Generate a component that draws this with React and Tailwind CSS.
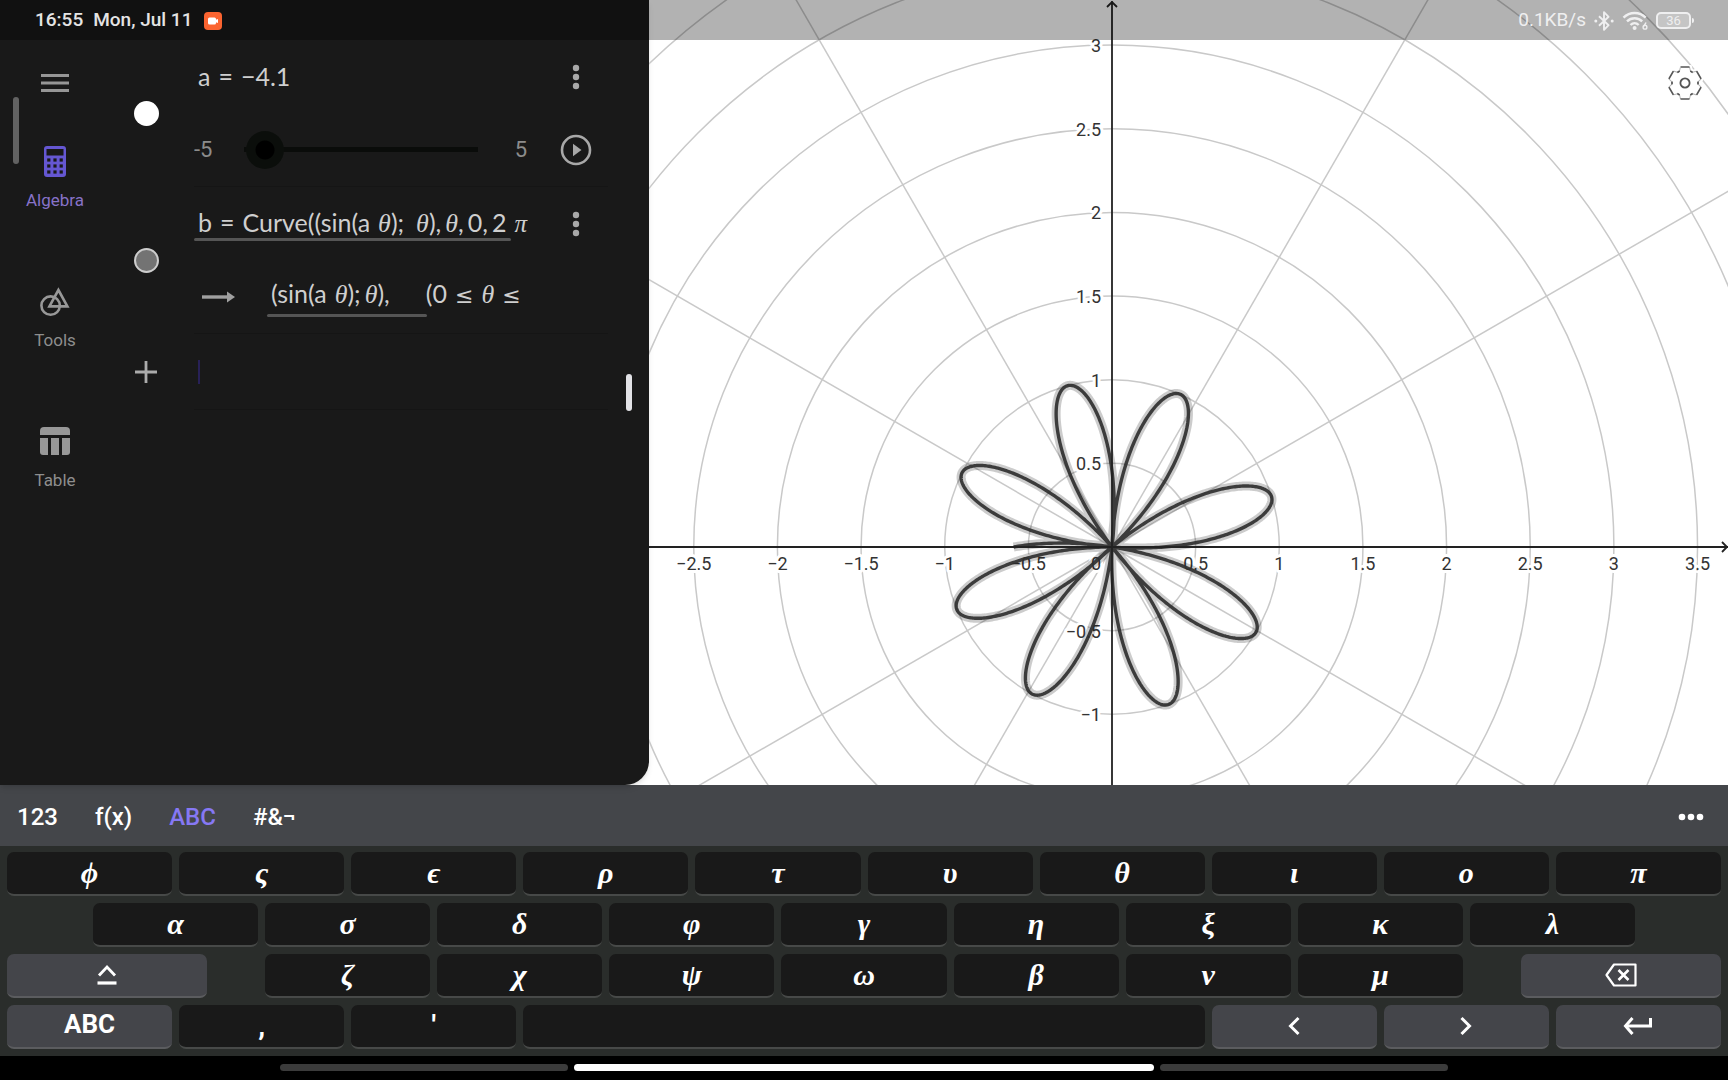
import React, { useState } from "react";

const SANS = "font-[Roboto,'Open_Sans',sans-serif]";
const MATH = "font-[Lato,'Open_Sans',sans-serif]";
const GREEK = "font-['Liberation_Serif','DejaVu_Serif',serif]";

const ROWS = [
  ["ϕ", "ς", "ϵ", "ρ", "τ", "υ", "θ", "ι", "ο", "π"],
  ["α", "σ", "δ", "φ", "γ", "η", "ξ", "κ", "λ"],
  ["ζ", "χ", "ψ", "ω", "β", "ν", "μ"],
];

// Graph geometry, in svg units
const VIEW = { w: 1079, h: 785 };
const ORIGIN = { x: 463, y: 547 };
const UNIT = 167.3;

const curvePath = (a) => {
  const steps = 1600;
  const points = [];
  for (let i = 0; i <= steps; i++) {
    const t = (i / steps) * 2 * Math.PI;
    const r = Math.sin(a * t) * UNIT;
    const x = ORIGIN.x + r * Math.cos(t);
    const y = ORIGIN.y - r * Math.sin(t);
    points.push(`${x.toFixed(2)} ${y.toFixed(2)}`);
  }
  return `M${points.join("L")}`;
};

const formatTick = (n) => String(n).replace("-", "−");

const Graph = ({ a }) => {
  const radii = Array.from({ length: 10 }, (_, i) => (i + 1) * 0.5);
  const rays = [30, 60, 120, 150, 210, 240, 300, 330];
  const xTicks = [-2.5, -2, -1.5, -1, -0.5, 0.5, 1, 1.5, 2, 2.5, 3, 3.5];
  const yTicks = [3, 2.5, 2, 1.5, 1, 0.5, -0.5, -1];
  const path = curvePath(a);

  return (
    <svg
      className="block w-full h-full"
      viewBox={`0 0 ${VIEW.w} ${VIEW.h}`}
      preserveAspectRatio="xMidYMid slice"
      role="img"
      aria-label="Polar graph"
    >
      <g fill="none" stroke="#c9c9c9" strokeWidth="1.5">
        {radii.map((r) => (
          <circle key={r} cx={ORIGIN.x} cy={ORIGIN.y} r={r * UNIT} />
        ))}
        {rays.map((deg) => {
          const rad = (deg * Math.PI) / 180;
          return (
            <line
              key={deg}
              x1={ORIGIN.x}
              y1={ORIGIN.y}
              x2={ORIGIN.x + 1200 * Math.cos(rad)}
              y2={ORIGIN.y - 1200 * Math.sin(rad)}
            />
          );
        })}
      </g>

      <g
        className={SANS}
        fontSize="18"
        fill="#333"
        stroke="#fff"
        strokeWidth="6"
        strokeLinejoin="round"
        paintOrder="stroke"
      >
        {xTicks.map((n) => (
          <text
            key={n}
            x={ORIGIN.x + n * UNIT}
            y={ORIGIN.y + 23}
            textAnchor="middle"
          >
            {formatTick(n)}
          </text>
        ))}
        <text x={ORIGIN.x - 11} y={ORIGIN.y + 23} textAnchor="end">
          0
        </text>
        {yTicks.map((n) => (
          <text
            key={n}
            x={ORIGIN.x - 11}
            y={ORIGIN.y - n * UNIT + 7}
            textAnchor="end"
          >
            {formatTick(n)}
          </text>
        ))}
      </g>

      <g fill="none" strokeLinejoin="round">
        <path d={path} stroke="#000" strokeOpacity="0.2" strokeWidth="9" />
        <path d={path} stroke="#303030" strokeOpacity="0.93" strokeWidth="3.4" />
      </g>

      {/* Axes */}
      <g fill="none" stroke="#222" strokeWidth="1.8">
        <path d={`M0 ${ORIGIN.y}H${VIEW.w}M${VIEW.w - 6} ${ORIGIN.y - 5}L${VIEW.w - 1} ${ORIGIN.y}L${VIEW.w - 6} ${ORIGIN.y + 5}`} />
        <path d={`M${ORIGIN.x} ${VIEW.h}V1M${ORIGIN.x - 5} 7L${ORIGIN.x} 2L${ORIGIN.x + 5} 7`} />
      </g>
    </svg>
  );
};

const GearIcon = () => (
  <svg width="36" height="36" viewBox="-18 -18 36 36" fill="none">
    {[0, 60, 120, 180, 240, 300].map((deg) => (
      <g key={deg} transform={`rotate(${deg})`}>
        <path
          d="M-4.5 -16H4.5L5.5 -11.8L7.5 -10.7L11.6 -11.9"
          stroke="#fff"
          strokeWidth="5"
        />
      </g>
    ))}
    {[0, 60, 120, 180, 240, 300].map((deg) => (
      <g key={deg} transform={`rotate(${deg})`}>
        <path
          d="M4.5 -16L5.5 -11.8L7.5 -10.7L11.6 -11.9"
          stroke="#b5b5b5"
          strokeWidth="1"
        />
        <path d="M-4.5 -16H4.5M5.3 -11.9L7.7 -10.6" stroke="#555" strokeWidth="1.7" />
      </g>
    ))}
    <circle r="4.6" stroke="#555" strokeWidth="1.8" />
  </svg>
);

const StatusBar = () => (
  <header
    className={`absolute inset-x-0 top-0 z-10 h-10 flex items-center justify-between bg-black/30 pt-px pl-[35px] pr-[34px] text-[19px] text-[#efeff0] ${SANS}`}
  >
    <div className="flex items-center font-medium text-[#e4e4e4]">
      <span className="mr-[10px]">16:55</span>
      <span className="mr-3">Mon, Jul 11</span>
      <svg width="18" height="18" viewBox="0 0 18 18">
        <rect width="18" height="18" rx="4" fill="#fb6430" />
        <rect x="4" y="5.5" width="8" height="7" rx="1.5" fill="#fff" />
        <path d="M11 8L14 7V11L11 10Z" fill="#fff" />
      </svg>
    </div>
    <div className="flex items-center gap-2">
      <span>0.1KB/s</span>
      <svg width="20" height="22" viewBox="0 0 20 22" fill="none">
        <path
          d="M5 6.2L14.6 15.2L10 19.8V2.2L14.6 6.8L5 15.8"
          stroke="currentColor"
          strokeWidth="1.9"
          strokeLinejoin="round"
        />
        <circle cx="1.8" cy="11" r="1.5" fill="currentColor" />
        <circle cx="18.2" cy="11" r="1.5" fill="currentColor" />
      </svg>
      <svg width="26" height="20" viewBox="0 0 26 20" fill="none">
        <path
          d="M1.5 6.6C7.8 0.4 17.4 0.4 23.7 6.6M5 10.4C9.3 6.2 16 6.2 20.2 10.4M8.5 14C10.9 11.7 14.3 11.7 16.7 14"
          stroke="currentColor"
          strokeWidth="2.4"
        />
        <circle cx="12.6" cy="17" r="2" fill="currentColor" />
        <path
          d="M24 11.5L22 15.2"
          stroke="currentColor"
          strokeWidth="1.5"
        />
        <circle cx="23" cy="16.2" r="1.9" stroke="currentColor" strokeWidth="1.4" />
      </svg>
      <div className="flex items-center">
        <span className="flex h-[17px] w-[35px] items-center justify-center rounded-[5px] border-2 border-current bg-white/25 text-[13px] leading-3">
          36
        </span>
        <span className="ml-px h-[5px] w-[2px] rounded-r bg-current" />
      </div>
    </div>
  </header>
);

const NavItem = ({ label, active, children }) => (
  <button
    type="button"
    className={`flex w-full flex-col items-center gap-[11px] text-[17px] leading-6 ${
      active ? "text-[#8772c8]" : "text-[#8e8e8e]"
    }`}
  >
    <span className="flex h-8 items-center">{children}</span>
    {label}
  </button>
);

const SideNav = () => (
  <nav className={`relative flex w-[110px] shrink-0 flex-col pt-[30px] ${SANS}`}>
    <span className="absolute left-[13px] top-[57px] h-[67px] w-[6px] rounded-full bg-[#626262]" />
    <button type="button" aria-label="Menu" className="mb-[49px] self-center">
      <svg width="28" height="26" viewBox="0 0 28 26">
        <path d="M0 5.5H28M0 13H28M0 20.5H28" stroke="#969696" strokeWidth="3" />
      </svg>
    </button>
    <div className="flex flex-col gap-[73px]">
      <NavItem label="Algebra" active>
        <svg width="22" height="31" viewBox="0 0 22 31">
          <rect width="22" height="31" rx="3" fill="#6557d2" />
          <rect x="2.5" y="3" width="17" height="6.5" fill="#191919" />
          {[14, 20, 26].map((y) =>
            [4.8, 11, 17.2].map((x) => (
              <rect key={`${x}-${y}`} x={x - 1.6} y={y - 1.6} width="3.2" height="3.2" fill="#191919" />
            )),
          )}
        </svg>
      </NavItem>
      <NavItem label="Tools">
        <svg width="30" height="31" viewBox="0 0 30 31" fill="none" stroke="#989898" strokeWidth="2.6">
          <circle cx="10.6" cy="19.6" r="9.2" />
          <path d="M18.4 4L27.4 20.4H9.4Z" />
        </svg>
      </NavItem>
      <NavItem label="Table">
        <svg width="30" height="28" viewBox="0 0 30 28" fill="#989898">
          <path d="M0 8V4A4 4 0 0 1 4 0H26A4 4 0 0 1 30 4V8Z" />
          <path d="M0 11H8V28H3A3 3 0 0 1 0 25Z" />
          <path d="M11 11H19V28H11Z" />
          <path d="M22 11H30V25A3 3 0 0 1 27 28H22Z" />
        </svg>
      </NavItem>
    </div>
  </nav>
);

const MoreButton = () => (
  <button type="button" aria-label="More">
    <svg width="8" height="26" viewBox="0 0 8 26" fill="#a8a8a8">
      <circle cx="4" cy="4" r="3.2" />
      <circle cx="4" cy="13" r="3.2" />
      <circle cx="4" cy="22" r="3.2" />
    </svg>
  </button>
);

const Theta = () => (
  <i className={`text-[26px] leading-none ${GREEK}`}>θ</i>
);

const LessEqual = () => (
  <span className="mx-2 font-['DejaVu_Sans',sans-serif] text-[22px] leading-none">≤</span>
);

const AlgebraRow = ({ marble, children }) => (
  <li className="flex">
    <div className="flex w-[72px] shrink-0 items-center justify-center">{marble}</div>
    <div className="ml-3 min-w-0 flex-1 border-b border-[#151515]">{children}</div>
  </li>
);

const Line = ({ children, action }) => (
  <div className="flex h-[73px]">
    <div className="relative flex min-w-0 flex-1 items-center overflow-hidden whitespace-nowrap">
      {children}
    </div>
    <div className="flex w-20 shrink-0 items-center justify-center pl-4">{action}</div>
  </div>
);

const AlgebraList = ({ a, setA }) => (
  <ul className={`min-w-0 flex-1 text-[25px] leading-8 text-[#cfcfcf] ${MATH}`}>
    <AlgebraRow
      marble={
        <button type="button" aria-label="Toggle a" className="size-[25px] rounded-full bg-white" />
      }
    >
      <Line action={<MoreButton />}>
        <span className="ml-1 flex gap-2 pb-[2px]">
          <span>a</span>
          <span>=</span>
          <span>{formatTick(a)}</span>
        </span>
      </Line>
      <Line
        action={
          <button type="button" aria-label="Play">
            <svg width="32" height="32" viewBox="0 0 32 32">
              <circle cx="16" cy="16" r="14" fill="none" stroke="#a8a8a8" strokeWidth="2.6" />
              <path d="M13 9.8L21.5 16L13 22.2Z" fill="#a8a8a8" />
            </svg>
          </button>
        }
      >
        <span className={`w-[31px] text-[22px] text-[#8c8c8c] ${SANS}`}>-5</span>
        <input
          type="range"
          aria-label="a"
          min="-5"
          max="5"
          step="0.1"
          value={a}
          onChange={(e) => setA(Number(e.target.value))}
          className="h-[38px] min-w-0 flex-1 appearance-none bg-[linear-gradient(#0a0c0a,#0a0c0a)] bg-[length:calc(100%-38px)_5px] bg-center bg-no-repeat outline-none [&::-webkit-slider-thumb]:size-[38px] [&::-webkit-slider-thumb]:appearance-none [&::-webkit-slider-thumb]:rounded-full [&::-webkit-slider-thumb]:bg-[radial-gradient(#000_9px,#0b0e0b_10px)]"
        />
        <span className={`ml-[18px] mr-px text-[22px] text-[#8c8c8c] ${SANS}`}>5</span>
      </Line>
    </AlgebraRow>

    <AlgebraRow
      marble={
        <button
          type="button"
          aria-label="Toggle b"
          className="size-[25px] rounded-full border-2 border-[#cdcdcd] bg-[#737373]"
        />
      }
    >
      <Line action={<MoreButton />}>
        <span className="ml-1 flex items-baseline pb-[2px]">
          <span>b</span>
          <span className="mx-2">=</span>
          <span className="mr-2">Curve((sin(a</span>
          <Theta />
          <span className="mr-3">);</span>
          <Theta />
          <span className="mr-1">),</span>
          <Theta />
          <span className="mr-1">,</span>
          <span className="mr-1">0,</span>
          <span className="mr-2">2</span>
          <i className={GREEK}>π</i>
        </span>
        <span className="absolute left-0 bottom-[19px] h-[3px] w-[317px] rounded-full bg-[#555]" />
      </Line>
      <Line>
        <svg className="ml-2 shrink-0" width="33" height="12" viewBox="0 0 33 12">
          <path d="M0 6H26" stroke="#a0a0a0" strokeWidth="3.4" />
          <path d="M25 0.5L33 6L25 11.5Z" fill="#a0a0a0" />
        </svg>
        <span className="ml-9 flex items-baseline pb-2">
          <span className="mr-2">(sin(a</span>
          <Theta />
          <span className="mr-1">);</span>
          <Theta />
          <span className="mr-9">),</span>
          <span>(0</span>
          <LessEqual />
          <Theta />
          <LessEqual />
        </span>
        <span className="absolute left-[73px] bottom-[16px] h-[3px] w-[160px] rounded-full bg-[#555]" />
      </Line>
    </AlgebraRow>

    <AlgebraRow
      marble={
        <button type="button" aria-label="Add expression">
          <svg width="22" height="22" viewBox="0 0 22 22">
            <path d="M11 0V22M0 11H22" stroke="#ababab" strokeWidth="2.8" />
          </svg>
        </button>
      }
    >
      <div className="flex h-[75px] items-center pl-1">
        <span className="h-6 w-[2px] bg-[#282158]" />
        <input
          type="text"
          aria-label="Expression"
          className="min-w-0 flex-1 bg-transparent outline-none"
        />
      </div>
    </AlgebraRow>
  </ul>
);

const Key = ({ special, className = "col-span-2", children, ...rest }) => (
  <button
    type="button"
    className={`flex h-11 items-center justify-center rounded-[7px] border-b-2 text-white ${
      special ? "border-[#5b5c5f] bg-[#44454a]" : "border-[#474948] bg-[#191919]"
    } ${className}`}
    {...rest}
  >
    {children}
  </button>
);

const GreekKey = ({ char, className = "col-span-2" }) => (
  <Key className={className}>
    <i className={`text-[30px] leading-8 font-bold ${GREEK}`}>{char}</i>
  </Key>
);

const Keyboard = () => {
  const [tab, setTab] = useState("ABC");

  return (
    <section className={SANS}>
      <div className="flex h-[61px] items-center justify-between bg-[#44464a] pt-[2px] pl-[17px] pr-6 text-2xl font-medium text-white">
        <div className="flex gap-[37px]">
          {["123", "f(x)", "ABC", "#&¬"].map((name) => (
            <button
              key={name}
              type="button"
              onClick={() => setTab(name)}
              className={tab === name ? "text-[#8678f4]" : ""}
            >
              {name}
            </button>
          ))}
        </div>
        <button type="button" aria-label="More options">
          <svg width="26" height="8" viewBox="0 0 26 8" fill="#fff">
            <circle cx="4" cy="4" r="3.3" />
            <circle cx="13" cy="4" r="3.3" />
            <circle cx="22" cy="4" r="3.3" />
          </svg>
        </button>
      </div>

      <div className="grid grid-cols-20 gap-[7px] bg-[#2a2d2b] px-[7px] pt-[6px] pb-[7px]">
        {ROWS[0].map((c) => (
          <GreekKey key={c} char={c} />
        ))}

        {ROWS[1].map((c, i) => (
          <GreekKey
            key={c}
            char={c}
            className={i === 0 ? "col-span-2 col-start-2" : "col-span-2"}
          />
        ))}

        <Key special className="col-span-3 col-start-1 mr-[51px]" aria-label="Shift">
          <svg width="20" height="22" viewBox="0 0 20 22" fill="none" stroke="#fff">
            <path d="M2 11.5L10 3L18 11.5" strokeWidth="2.8" />
            <path d="M0.5 19H19.5" strokeWidth="3.2" />
          </svg>
        </Key>
        {ROWS[2].map((c) => (
          <GreekKey key={c} char={c} />
        ))}
        <Key special className="col-span-3 ml-[51px]" aria-label="Backspace">
          <svg width="32" height="24" viewBox="0 0 32 24" fill="none" stroke="#fff">
            <path d="M9 1.5H30.5V22.5H9L1.5 12Z" strokeWidth="2.2" strokeLinejoin="round" />
            <path d="M13.5 7L23.5 17M23.5 7L13.5 17" strokeWidth="2.6" />
          </svg>
        </Key>

        <Key special>
          <span className="pb-1 text-[26px] font-bold">ABC</span>
        </Key>
        <Key>
          <span className="text-[28px] leading-8 font-bold">,</span>
        </Key>
        <Key>
          <span className="text-[28px] leading-8 font-bold">'</span>
        </Key>
        <Key className="col-span-8" aria-label="Space" />
        <Key special aria-label="Left">
          <svg width="12" height="20" viewBox="0 0 12 20" fill="none">
            <path d="M10.5 2L2.5 10L10.5 18" stroke="#fff" strokeWidth="3" />
          </svg>
        </Key>
        <Key special aria-label="Right">
          <svg width="12" height="20" viewBox="0 0 12 20" fill="none">
            <path d="M1.5 2L9.5 10L1.5 18" stroke="#fff" strokeWidth="3" />
          </svg>
        </Key>
        <Key special aria-label="Enter">
          <svg width="30" height="20" viewBox="0 0 30 20" fill="none" stroke="#fff" strokeWidth="3">
            <path d="M9.5 2L2.5 10L9.5 18" />
            <path d="M2.5 10H27.5V2" />
          </svg>
        </Key>
      </div>
    </section>
  );
};

export default function App() {
  const [a, setA] = useState(-4.1);

  return (
    <div className="relative flex h-screen flex-col overflow-hidden bg-black">
      <StatusBar />

      <main className="flex min-h-0 flex-1 bg-white">
        <section className="relative flex w-[649px] shrink-0 rounded-br-3xl bg-[#191919] pt-10 pr-[41px] shadow-md">
          <SideNav />
          <AlgebraList a={a} setA={setA} />
          <span className="absolute right-[17px] top-[374px] h-[37px] w-[6px] rounded-full bg-[#e2e2e6]" />
        </section>
        <section className="relative min-w-0 flex-1">
          <Graph a={a} />
          <button type="button" aria-label="Settings" className="absolute right-[25px] top-[65px]">
            <GearIcon />
          </button>
        </section>
      </main>

      <Keyboard />

      <footer className="flex h-6 items-center justify-center gap-[6px] bg-black pb-px">
        <span className="h-[7px] w-1/6 rounded-full bg-[#3b3b3b]" />
        <span className="h-[7px] w-[580px] rounded-full bg-white" />
        <span className="h-[7px] w-1/6 rounded-full bg-[#3b3b3b]" />
      </footer>
    </div>
  );
}
